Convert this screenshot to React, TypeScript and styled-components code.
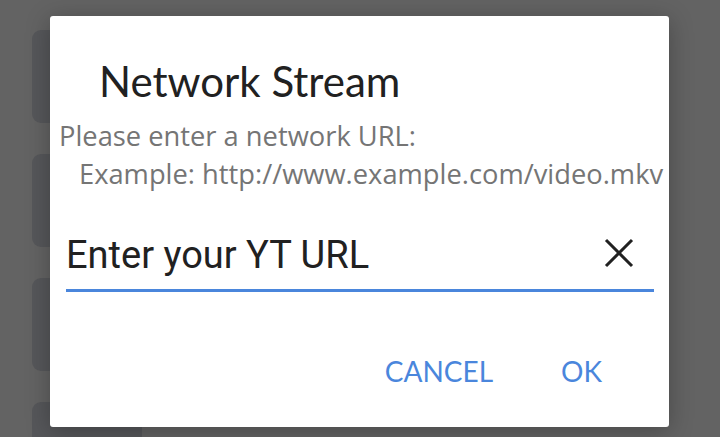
import React from "react";
import styled, { createGlobalStyle } from "styled-components";

const Global = createGlobalStyle`
  html, body { margin: 0; padding: 0; }
  body { width: 720px; height: 437px; overflow: hidden; background: #636363; }
`;

const Page = styled.div`
  position: relative;
  width: 720px;
  height: 437px;
  overflow: hidden;
  background: #636363;
  box-sizing: border-box;
  padding-left: 32px;
  display: grid;
  grid-template-columns: 110px 1fr;
  column-gap: 13px;
`;

const CardColumn = styled.div`
  display: flex;
  flex-direction: column;
  gap: 31px;
  padding-top: 30px;
`;

const SideCard = styled.div`
  height: 93px;
  flex-shrink: 0;
  border-radius: 9px;
  background: #56575a;
`;

const Main = styled.div`
  display: flex;
  flex-direction: column;
  justify-content: flex-end;
`;

const GameRow = styled.div`
  height: 12px;
  background: #555555;
  display: flex;
  align-items: flex-start;
  gap: 10px;
  padding-left: 35px;
  overflow: hidden;
`;

const GameLabel = styled.span`
  font-family: Lato, sans-serif;
  font-size: 28px;
  line-height: 28px;
  color: #1c1c1c;
  margin-top: -1px;
`;

const NewBadge = styled.span`
  background: #7a1c1c;
  color: #a44;
  font-family: Lato, sans-serif;
  font-weight: 700;
  font-size: 18px;
  line-height: 24px;
  padding: 0 7px;
  margin-top: 2px;
`;

const Dialog = styled.div`
  position: absolute;
  left: 50px;
  top: 16px;
  width: 619px;
  height: 411px;
  background: #ffffff;
  border-radius: 3px;
  box-shadow: 0 4px 24px rgba(0, 0, 0, 0.28);
  display: flex;
  flex-direction: column;
  font-family: Lato, "Noto Sans", sans-serif;
`;

const Title = styled.h2`
  margin: 40px 0 0 49px;
  font-family: Lato, sans-serif;
  font-weight: 400;
  font-size: 42px;
  line-height: 50px;
  color: #212121;
`;

const Messages = styled.div`
  margin-top: 11px;
  display: flex;
  flex-direction: column;
`;

const Message = styled.p<{ $indent: number }>`
  margin: 0 0 0 ${(p) => p.$indent}px;
  font-family: "Open Sans", sans-serif;
  font-size: 27.3px;
  line-height: 38px;
  color: #757575;
  white-space: nowrap;
`;

const Field = styled.div`
  margin: 40px 15px 0 16px;
  display: flex;
  align-items: flex-start;
  border-bottom: 3px solid #4a86dc;
  height: 56px;
`;

const Input = styled.input`
  flex: 1;
  min-width: 0;
  border: none;
  outline: none;
  background: transparent;
  padding: 0;
  height: 45px;
  line-height: 45px;
  font-family: Roboto, sans-serif;
  font-size: 38px;
  color: #212121;
  &::placeholder { color: #212121; opacity: 1; }
`;

const ClearButton = styled.button`
  border: none;
  background: transparent;
  padding: 0;
  width: 40px;
  height: 40px;
  margin-right: 15px;
  display: flex;
  align-items: center;
  justify-content: center;
  cursor: pointer;
`;

const Actions = styled.div`
  margin-top: 62px;
  display: flex;
  justify-content: flex-end;
  gap: 68px;
  padding-right: 67px;
`;

const ActionButton = styled.button`
  border: none;
  background: transparent;
  padding: 0;
  font-family: Lato, sans-serif;
  font-size: 28px;
  line-height: 34px;
  color: #4a86dc;
  cursor: pointer;
`;

export default function App() {
  return (
    <>
      <Global />
      <Page>
        <CardColumn>
          <SideCard />
          <SideCard />
          <SideCard />
          <SideCard />
        </CardColumn>
        <Main>
          <GameRow>
            <GameLabel>Games</GameLabel>
            <NewBadge>NEW</NewBadge>
          </GameRow>
        </Main>
        <Dialog>
          <Title>Network Stream</Title>
          <Messages>
            <Message $indent={9}>Please enter a network URL:</Message>
            <Message $indent={29}>Example: http://www.example.com/video.mkv</Message>
          </Messages>
          <Field>
            <Input placeholder="Enter your YT URL" />
            <ClearButton aria-label="Clear">
              <svg width="30" height="30" viewBox="0 0 30 30">
                <path d="M2 2 L28 28 M28 2 L2 28" stroke="#212121" strokeWidth="3" strokeLinecap="butt" />
              </svg>
            </ClearButton>
          </Field>
          <Actions>
            <ActionButton>CANCEL</ActionButton>
            <ActionButton>OK</ActionButton>
          </Actions>
        </Dialog>
      </Page>
    </>
  );
}
